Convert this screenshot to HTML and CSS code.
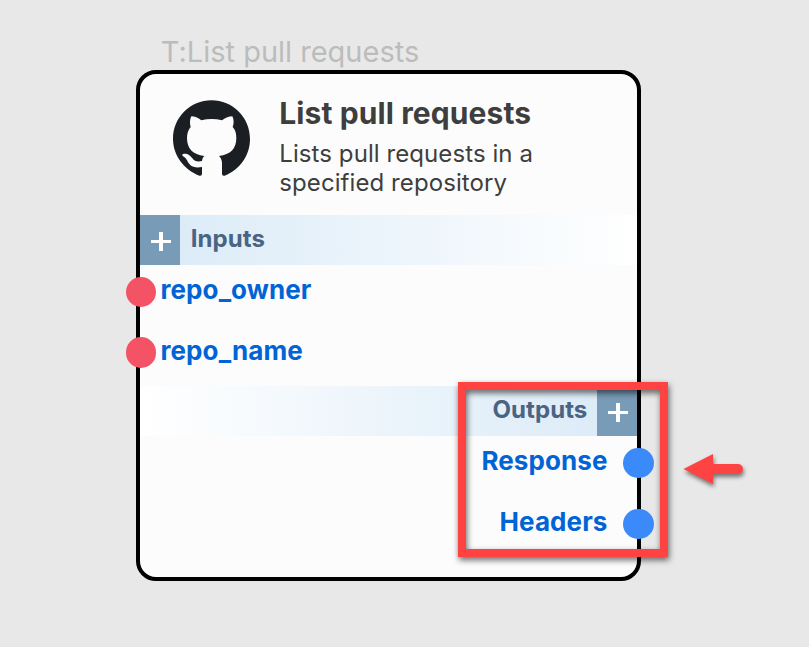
FILE: index.html
```html
<!DOCTYPE html>
<html lang="en">
<head>
<meta charset="utf-8">
<title>List pull requests</title>
<link rel="stylesheet" href="styles.css">
</head>
<body>
<main class="canvas">
  <div class="node-label">T:List pull requests</div>
  <section class="node">
    <header class="node-header">
      <svg class="logo" viewBox="39 30 231 231" aria-hidden="true"><path d="M154.500 31C91 31 39 82 39 147c0 49 33 92 79 110q8 2 8-6v-20c-30 5-38-7-46-22-5-9-17-11-12-16 12-5 21 3 29 12 7 10 17 11 29 8 1-7 3-11 7-15-35-4-52-22-52-54 0-14 4-24 11-33-3-9-3-23 2-32 10 0 20 4 30 12 20-5 42-5 62 0 11-8 21-12 31-12 5 9 5 23 1 32 8 9 11 19 11 33 0 32-17 50-52 54 6 6 9 13 9 22v31q0 8 8 6c46-18 76-61 76-110C270 82 218 31 154.500 31z"/></svg>
      <div class="heading">
        <h1>List pull requests</h1>
        <p>Lists pull requests in a<br>specified repository</p>
      </div>
    </header>
    <div class="bar bar-in">
      <span class="plus"></span><span class="bar-title">Inputs</span>
    </div>
    <ul class="ports ports-in">
      <li><i class="dot"></i><span>repo_owner</span></li>
      <li><i class="dot"></i><span>repo_name</span></li>
    </ul>
    <div class="bar bar-out">
      <span class="bar-title">Outputs</span><span class="plus"></span>
    </div>
    <ul class="ports ports-out">
      <li><span>Response</span><i class="dot"></i></li>
      <li><span>Headers</span><i class="dot"></i></li>
    </ul>
  </section>
  <div class="highlight"></div>
  <svg class="arrow" viewBox="0 0 70 40" aria-hidden="true"><path d="M3.500 19 33 4v10h25a5 5 0 0 1 0 10H33v10z"/></svg>
</main>
</body>
</html>
```
FILE: styles.css
```css
* { box-sizing: border-box; }
body {
  margin: 0;
  background: #e8e8e8;
  font-family: Inter, "Liberation Sans", sans-serif;
  font-feature-settings: "calt" 0;
}
.canvas {
  position: relative;
  width: 809px;
  height: 647px;
  padding: 33.500px 0 0 136px;
  overflow: hidden;
}
.node-label {
  height: 36px;
  padding-left: 24.700px;
  font-size: 29px;
  line-height: 36px;
  color: #bcbcbc;
  white-space: nowrap;
}
.node {
  width: 505.300px;
  height: 511px;
  border: 4px solid #000;
  border-radius: 20px;
  background: #fcfcfc;
}
.node-header {
  display: flex;
  height: 141px;
  padding: 27px 0 0 33px;
}
.logo {
  width: 77px;
  height: 77px;
  margin-top: -.7px;
  fill: #1b1f24;
}
.heading { margin-left: 29.300px; color: #3e3e3e; white-space: nowrap; }
h1 {
  margin: -7px 0 0;
  font-size: 30px;
  font-weight: 700;
  line-height: 38px;
  letter-spacing: .1px;
}
p {
  margin: 7px 0 0;
  font-size: 24px;
  line-height: 29px;
  letter-spacing: .08px;
}
.bar {
  display: flex;
  height: 50.300px;
  color: #4a6482;
  font-size: 24px;
  font-weight: 700;
  line-height: 47px;
}
.bar-in { background: linear-gradient(to right, #d9eaf7, #fff); }
.bar-out { justify-content: flex-end; background: linear-gradient(to left, #d9eaf7, #fff); }
.bar-in .bar-title { margin-left: 10.300px; letter-spacing: .08px; }
.bar-out .bar-title { margin-right: 9.500px; letter-spacing: .08px; }
.plus {
  width: 40.400px;
  height: 100%;
  background:
    linear-gradient(#fff, #fff) 11px 25px / 20px 3px no-repeat,
    linear-gradient(#fff, #fff) 19px 17px / 4px 19px no-repeat,
    #789bb7;
}
.ports {
  margin: 0;
  padding: 0;
  list-style: none;
  color: #0064d6;
  font-size: 26px;
  font-weight: 700;
  letter-spacing: .09px;
}
.ports li {
  display: flex;
  height: 60.500px;
  line-height: 50px;
}
.ports-in li + li { line-height: 52px; }
.ports-out li { justify-content: flex-end; line-height: 49px; }
.ports-out li + li { line-height: 50px; }
.dot {
  width: 30.300px;
  height: 30.300px;
  margin-top: 12px;
  border-radius: 50%;
}
.ports-in .dot { margin-left: -14.200px; margin-right: 4.400px; background: #f45265; }
.ports-out .dot { margin-left: 15.800px; margin-right: -16.300px; background: #3b8afa; }
.highlight {
  position: absolute;
  left: 458px;
  top: 382px;
  width: 210px;
  height: 175px;
  border: 8px solid #ff4343;
  filter: drop-shadow(1px 3px 3px rgba(0, 0, 0, .6));
}
.arrow {
  position: absolute;
  left: 680px;
  top: 450px;
  width: 70px;
  height: 40px;
  fill: #ff4343;
  overflow: visible;
  filter: drop-shadow(1px 3px 2px rgba(0, 0, 0, .5));
}
```
